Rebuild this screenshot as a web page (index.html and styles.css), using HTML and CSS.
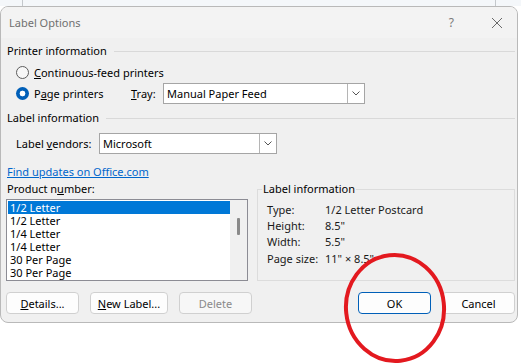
FILE: index.html
```html
<!DOCTYPE html>
<html lang="en">
<head>
  <meta charset="UTF-8">
  <title>Label Options</title>
  <link rel="stylesheet" href="styles.css">
</head>
<body>

  <div class="desk"></div>

  <div class="dialog">
    <div class="titlebar">
      <span class="title">Label Options</span>
      <span class="help">?</span>
      <svg class="close" width="12" height="12" viewBox="0 0 12 12">
        <path d="M1 1 L11 11 M11 1 L1 11" stroke="#6a6a6a" stroke-width="1" fill="none"/>
      </svg>
    </div>

    <div class="body">
      <div class="group-head">Printer information</div>

      <div class="row radio-row first">
        <span class="radio"></span>
        <span><u>C</u>ontinuous-feed printers</span>
      </div>
      <div class="row radio-row">
        <span class="radio on"></span>
        <span class="page-label">P<u>a</u>ge printers</span>
        <span class="tray-label"><u>T</u>ray:</span>
        <div class="select tray">
          <span class="select-text">Manual Paper Feed</span>
          <span class="arrow"><svg width="8" height="5" viewBox="0 0 8 5"><path d="M0.5 0.5 L4 4 L7.5 0.5" stroke="#555" fill="none"/></svg></span>
        </div>
      </div>

      <div class="group-head second">Label information</div>

      <div class="row vendors">
        <span class="vendor-label">Label <u>v</u>endors:</span>
        <div class="select vendor">
          <span class="select-text">Microsoft</span>
          <span class="arrow"><svg width="8" height="5" viewBox="0 0 8 5"><path d="M0.5 0.5 L4 4 L7.5 0.5" stroke="#555" fill="none"/></svg></span>
        </div>
      </div>

      <a class="link" href="#">Find updates on Office.com</a>

      <div class="lower">
        <div class="product">
          <div class="product-label">Product n<u>u</u>mber:</div>
          <div class="list">
            <div class="items">
              <div class="item selected">1/2 Letter</div>
              <div class="item">1/2 Letter</div>
              <div class="item">1/4 Letter</div>
              <div class="item">1/4 Letter</div>
              <div class="item">30 Per Page</div>
              <div class="item">30 Per Page</div>
            </div>
            <div class="scrollbar"><span class="thumb"></span></div>
          </div>
        </div>

        <fieldset class="info">
          <legend>Label information</legend>
          <div class="info-grid">
            <span>Type:</span><span>1/2 Letter Postcard</span>
            <span>Height:</span><span>8.5"</span>
            <span>Width:</span><span>5.5"</span>
            <span>Page size:</span><span>11" × 8.5"</span>
          </div>
        </fieldset>
      </div>

      <div class="buttons">
        <button class="btn"><u>D</u>etails...</button>
        <button class="btn wide"><u>N</u>ew Label...</button>
        <button class="btn" disabled>Delete</button>
        <button class="btn default push">OK</button>
        <button class="btn">Cancel</button>
      </div>
    </div>
  </div>

  <!-- red circle drawn over the OK button -->
  <svg class="mark" width="116" height="122" viewBox="0 0 116 122">
    <ellipse cx="57" cy="60" rx="49" ry="53" stroke="#e3191f" stroke-width="4" fill="none" transform="rotate(-6 57 60)"/>
  </svg>

</body>
</html>
```

FILE: styles.css
```css
body {
  margin: 0;
  background: #ffffff;
  font-family: "Noto Sans", "Open Sans", sans-serif;
  font-size: 11px;
  color: #000;
  position: relative;
  width: 521px;
  height: 364px;
  overflow: hidden;
}
.desk {
  height: 6px;
  background:
    linear-gradient(to right, transparent 22px, #c4c8cc 22px, #c4c8cc 23px, transparent 23px, transparent 495px, #c4c8cc 495px, #c4c8cc 496px, transparent 496px),
    #f4f7fa;
}
.dialog {
  box-sizing: border-box;
  width: 518px;
  height: 317px;
  background: #f0f0f0;
  border: 1px solid #b9b9b9;
  border-radius: 8px;
  overflow: hidden;
}

/* title bar */
.titlebar {
  height: 31px;
  background: #f3f3f3;
  display: flex;
  align-items: center;
  padding-left: 8px;
}
.title {
  color: #707070;
  flex: 1;
}
.help {
  color: #7a7a7a;
  font-size: 12px;
  margin-right: 37px;
}
.close {
  margin-right: 14px;
}

.body {
  padding: 0 2px 0 5px;
}

/* group headings with rule */
.group-head {
  display: flex;
  align-items: center;
  height: 16px;
  line-height: 16px;
  margin-top: 5px;
  padding-left: 1px;
}
.group-head::after {
  content: "";
  flex: 1;
  height: 1px;
  background: #d9d9d9;
  margin-left: 7px;
}
.group-head.second {
  margin-top: 7px;
}

.row {
  display: flex;
  align-items: center;
  height: 20px;
}
.radio-row {
  padding-left: 10px;
  margin-top: 1px;
}
.radio-row.first {
  margin-top: 3px;
}
.radio {
  box-sizing: border-box;
  width: 13px;
  height: 13px;
  border: 1px solid #5c5c5c;
  border-radius: 50%;
  background: #f7f7f7;
  margin-right: 5px;
}
.radio.on {
  border: none;
  background: radial-gradient(circle, #ffffff 0 2.6px, #005fb8 3.2px);
}
.page-label {
  width: 97px;
}
.tray-label {
  width: 32px;
}

/* combo boxes */
.select {
  box-sizing: border-box;
  height: 21px;
  background: #fff;
  border: 1px solid #a5a5a5;
  display: flex;
  align-items: center;
}
.select-text {
  flex: 1;
  padding-left: 3px;
}
.arrow {
  box-sizing: border-box;
  width: 17px;
  height: 19px;
  border-left: 1px solid #b5b5b5;
  display: flex;
  align-items: center;
  justify-content: center;
}
.tray {
  width: 202px;
}
.vendors {
  margin-top: 7px;
  padding-left: 10px;
}
.vendor-label {
  width: 83px;
}
.vendor {
  width: 178px;
}

.link {
  display: block;
  margin-top: 11px;
  height: 16px;
  line-height: 16px;
  padding-left: 1px;
  color: #0066cc;
}

/* product list and info */
.lower {
  display: flex;
  gap: 9px;
  margin-top: 1px;
}
.product {
  width: 242px;
}
.product-label {
  height: 16px;
  line-height: 16px;
  padding-left: 1px;
}
.list {
  box-sizing: border-box;
  margin-top: 2px;
  height: 82px;
  border: 1px solid #8c8c94;
  background: #fff;
  display: flex;
  overflow: hidden;
}
.items {
  flex: 1;
  padding: 1px 0 0 1px;
}
.item {
  height: 13px;
  line-height: 13px;
  padding-left: 2px;
}
.item.selected {
  background: #0078d7;
  color: #fff;
}
.scrollbar {
  width: 17px;
  background: #f0f0f0;
  display: flex;
  justify-content: center;
}
.thumb {
  width: 3px;
  height: 17px;
  margin-top: 18px;
  background: #8a8a8a;
  border-radius: 1px;
}

.info {
  flex: 1;
  margin: 0;
  padding: 4px 8px 0 9px;
  border: 1px solid #dcdcdc;
  min-width: 0;
}
.info legend {
  padding: 0 1px;
  margin-left: -5px;
  height: 16px;
  line-height: 16px;
}
.info-grid {
  display: grid;
  grid-template-columns: 58px auto;
  grid-auto-rows: 16.4px;
  align-items: center;
  color: #1a1a1a;
}

/* buttons */
.buttons {
  display: flex;
  gap: 11px;
  margin-top: 11px;
}
.btn {
  box-sizing: border-box;
  width: 73px;
  height: 22px;
  padding: 0;
  font-family: inherit;
  font-size: 11px;
  color: #000;
  background: #fdfdfd;
  border: 1px solid #d0d0d0;
  border-radius: 4px;
}
.btn.wide {
  width: 78px;
}
.btn:disabled {
  color: #8a8a8a;
  background: #f7f7f7;
}
.btn.default {
  border-color: #005fb8;
}
.push {
  margin-left: auto;
}

.mark {
  position: absolute;
  left: 338px;
  top: 248px;
}
```
